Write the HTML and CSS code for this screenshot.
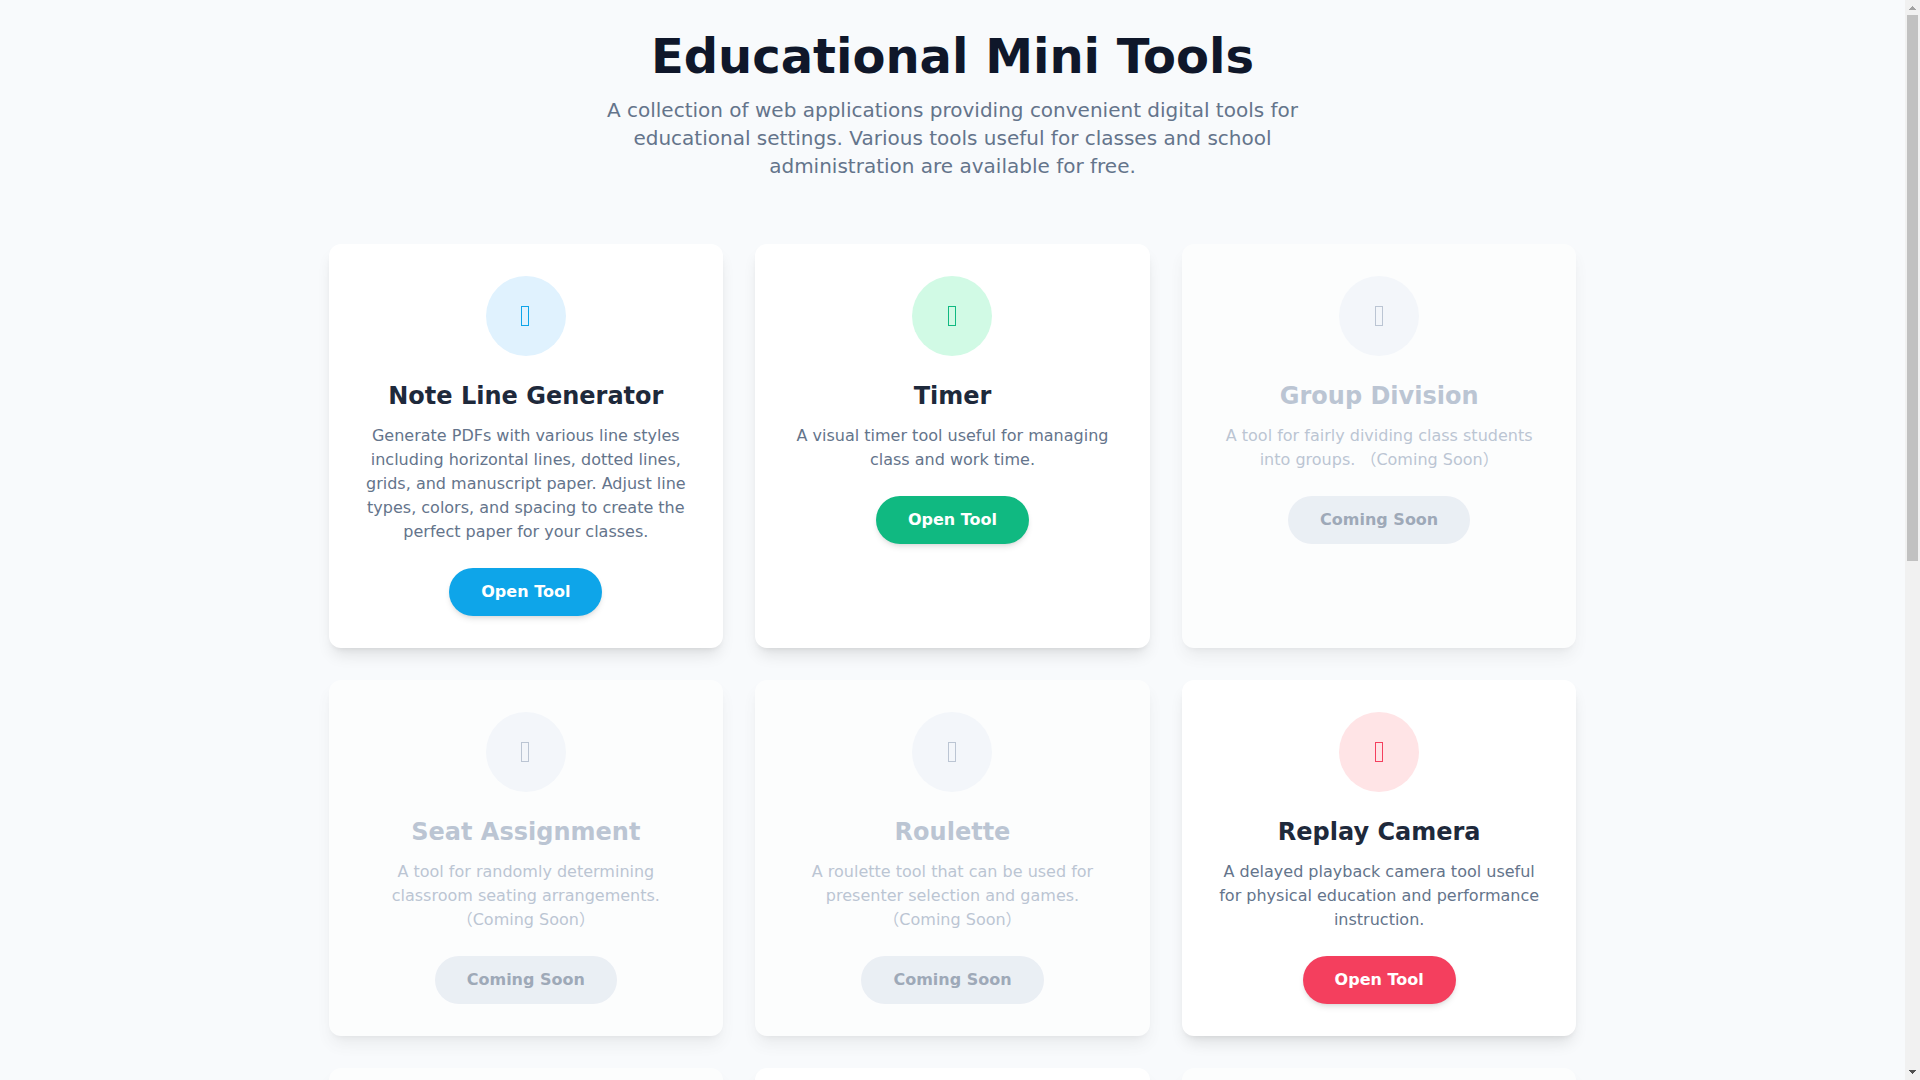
FILE: index.html
```
<!DOCTYPE html>
<html lang="en">
<head>
  <meta charset="UTF-8" />
  <meta name="viewport" content="width=device-width, initial-scale=1.0"/>
  <title>Educational Mini Tools</title>
  <link rel="stylesheet" href="styles.css">
</head>
<body>

  <div class="page">
    <div class="container">
      <header>
        <h1>Educational Mini Tools</h1>
        <p>A collection of web applications providing convenient digital tools for educational settings. Various tools useful for classes and school administration are available for free.</p>
      </header>

      <main class="tools">
        <div class="card sky">
          <div class="icon"><svg width="9" height="20" viewBox="0 0 9 20"><rect x="0.5" y="0.5" width="7" height="19"/></svg></div>
          <h2>Note Line Generator</h2>
          <p>Generate PDFs with various line styles including horizontal lines, dotted lines, grids, and manuscript paper. Adjust line types, colors, and spacing to create the perfect paper for your classes.</p>
          <a class="btn" href="#">Open Tool</a>
        </div>

        <div class="card emerald">
          <div class="icon"><svg width="9" height="20" viewBox="0 0 9 20"><rect x="0.5" y="0.5" width="7" height="19"/></svg></div>
          <h2>Timer</h2>
          <p>A visual timer tool useful for managing class and work time.</p>
          <a class="btn" href="#">Open Tool</a>
        </div>

        <div class="card disabled">
          <div class="icon"><svg width="9" height="20" viewBox="0 0 9 20"><rect x="0.5" y="0.5" width="7" height="19"/></svg></div>
          <h2>Group Division</h2>
          <p>A tool for fairly dividing class students into groups. （Coming Soon）</p>
          <button class="btn" disabled>Coming Soon</button>
        </div>

        <div class="card disabled">
          <div class="icon"><svg width="9" height="20" viewBox="0 0 9 20"><rect x="0.5" y="0.5" width="7" height="19"/></svg></div>
          <h2>Seat Assignment</h2>
          <p>A tool for randomly determining classroom seating arrangements. （Coming Soon）</p>
          <button class="btn" disabled>Coming Soon</button>
        </div>

        <div class="card disabled">
          <div class="icon"><svg width="9" height="20" viewBox="0 0 9 20"><rect x="0.5" y="0.5" width="7" height="19"/></svg></div>
          <h2>Roulette</h2>
          <p>A roulette tool that can be used for presenter selection and games. （Coming Soon）</p>
          <button class="btn" disabled>Coming Soon</button>
        </div>

        <div class="card rose">
          <div class="icon"><svg width="9" height="20" viewBox="0 0 9 20"><rect x="0.5" y="0.5" width="7" height="19"/></svg></div>
          <h2>Replay Camera</h2>
          <p>A delayed playback camera tool useful for physical education and performance instruction.</p>
          <a class="btn" href="#">Open Tool</a>
        </div>

        <div class="card disabled"></div>
        <div class="card"></div>
        <div class="card disabled"></div>
      </main>
    </div>
  </div>

  <div class="scrollbar" aria-hidden="true">
    <svg class="arrow up" width="15" height="15" viewBox="0 0 15 15"><path d="M7 6h1v1h1v1h1v1h1v1H4V9h1V8h1V7h1z"/></svg>
    <div class="track"><div class="thumb"></div></div>
    <svg class="arrow down" width="15" height="15" viewBox="0 0 15 15"><path d="M4 5h7v1h-1v1H9v1H8v1H7V8H6V7H5V6H4z"/></svg>
  </div>

</body>
</html>
```
FILE: styles.css
```
:root {
  --background: #f8fafc;
  --heading: #0f172a;
  --card-title: #1e293b;
  --text: #64748b;
  --muted: #94a3b8;
}

* {
  box-sizing: border-box;
}

body {
  display: flex;
  height: 100vh;
  font-family: "DejaVu Sans", "Noto Sans CJK SC", sans-serif;
  font-size: 16px;
  line-height: 24px;
  background: var(--background);
  color: var(--card-title);
  margin: 0;
}

h1, h2, p {
  margin: 0;
}

.page {
  flex: 1;
  min-width: 0;
  overflow: hidden;
}

.container {
  max-width: 1280px;
  margin: 0 auto;
  padding: 32px 16px;
}

header {
  text-align: center;
  margin-bottom: 64px;
}

header h1 {
  font-size: 48px;
  line-height: 48px;
  color: var(--heading);
  margin-bottom: 16px;
}

header p {
  max-width: 768px;
  margin: 0 auto;
  font-size: 20px;
  line-height: 28px;
  color: var(--text);
}

.tools {
  display: grid;
  grid-template-columns: repeat(3, 1fr);
  gap: 32px;
}

.card {
  display: flex;
  flex-direction: column;
  align-items: center;
  padding: 32px;
  text-align: center;
  background: white;
  border-radius: 12px;
  box-shadow: 0 10px 15px -3px rgba(0,0,0,0.1), 0 4px 6px -4px rgba(0,0,0,0.1);
}

.icon {
  display: flex;
  align-items: center;
  justify-content: center;
  width: 80px;
  height: 80px;
  margin-bottom: 24px;
  border-radius: 50%;
}

.icon svg {
  fill: none;
  stroke: currentColor;
}

.card h2 {
  font-size: 24px;
  line-height: 32px;
  margin-bottom: 12px;
}

.card p {
  color: var(--text);
  margin-bottom: 24px;
}

.btn {
  display: inline-block;
  padding: 12px 32px;
  border: none;
  border-radius: 24px;
  font-family: inherit;
  font-size: 16px;
  font-weight: bold;
  line-height: 24px;
  color: white;
  text-decoration: none;
  box-shadow: 0 4px 6px -1px rgba(0,0,0,0.1), 0 2px 4px -2px rgba(0,0,0,0.1);
}

.sky .icon {
  background: #e0f2fe;
  color: #0ea5e9;
}

.sky .btn {
  background: #0ea5e9;
}

.emerald .icon {
  background: #d1fae5;
  color: #10b981;
}

.emerald .btn {
  background: #10b981;
}

.rose .icon {
  background: #ffe4e6;
  color: #f43f5e;
}

.rose .btn {
  background: #f43f5e;
}

/* tools that are not released yet */
.disabled {
  opacity: 0.6;
}

.disabled .icon {
  background: #f1f5f9;
  color: var(--muted);
}

.disabled h2,
.disabled p {
  color: var(--muted);
}

.disabled .btn {
  background: #e2e8f0;
  color: var(--text);
  box-shadow: none;
  cursor: not-allowed;
}

.scrollbar {
  display: flex;
  flex-direction: column;
  width: 15px;
  background: #f1f1f1;
}

.track {
  flex: 1;
  padding: 0 2px;
}

.thumb {
  height: 52%;
  background: #c1c1c1;
}

.arrow {
  display: block;
}

.arrow.up {
  fill: #a3a3a3;
}

.arrow.down {
  fill: #505050;
}

@media (max-width: 1024px) {
  .tools {
    grid-template-columns: repeat(2, 1fr);
  }
}

@media (max-width: 640px) {
  .tools {
    grid-template-columns: 1fr;
  }
}
```
